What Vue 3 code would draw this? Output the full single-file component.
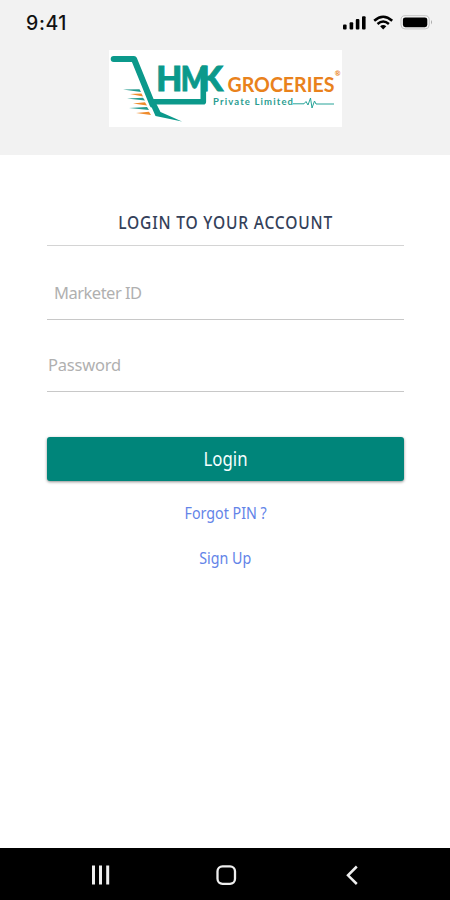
<script setup>
import { ref } from 'vue'
const marketerId = ref('')
const password = ref('')
</script>

<template>
  <main class="screen">
    <header class="header">
      <div class="status">
        <span class="time">9:41</span>
        <svg class="indicators" width="92" height="18" viewBox="0 0 92 18">
          <rect x="2" y="10.5" width="3.6" height="5" rx="1" />
          <rect x="8.6" y="8.2" width="3.6" height="7.3" rx="1" />
          <rect x="14.8" y="5" width="3.6" height="10.5" rx="1" />
          <rect x="21" y="2.2" width="3.6" height="13.3" rx="1" />
          <g fill="none" stroke="#000" stroke-width="2.5">
            <path d="M33.2 6.7Q42.2 -1.2 51.2 6.7" />
            <path d="M36.5 10Q42.2 5 47.9 10" />
          </g>
          <path d="M39.1 12.3Q42.2 9.6 45.3 12.3L42.2 15.4Z" />
          <rect x="60" y="1.7" width="28.2" height="13.2" rx="4" fill="#f7f7f7" stroke="#c4c4c4" />
          <rect x="61.9" y="3.4" width="24.4" height="9.8" rx="2.4" />
          <path d="M90 6.1Q92 8.3 90 10.5Z" fill="#aaa" />
        </svg>
      </div>
      <svg class="logo" width="233" height="77" viewBox="0 0 233 77">
        <rect width="233" height="77" fill="#fff" />
        <g fill="none" stroke="#0b998b" stroke-linejoin="round">
          <path d="M4.7 9H25L43.5 54.5" stroke-width="6" stroke-linecap="round" />
          <path d="M43 51.7H94.3V17" stroke-width="5.6" />
        </g>
        <path d="M39 49L46 51L51.5 62L73 71.5L46.5 66Z" fill="#0b998b" />
        <g fill="#249b8f">
          <path d="M14 39.5L30.5 39.3L32 42Z" />
          <path d="M18 48.5L34 47.8L36 50.5Z" />
          <path d="M20 58L38 57L40 60Z" />
        </g>
        <g fill="#ef8b2c">
          <path d="M21 44L32.5 43.4L34 46.5Z" />
          <path d="M24 53.5L36 52.2L38 55.5Z" />
          <path d="M27 63L40 61.8L42 65Z" />
        </g>
        <text class="brand" y="40.7"><tspan x="47.3" textLength="26" lengthAdjust="spacingAndGlyphs">H</tspan><tspan x="71.8" textLength="27.5" lengthAdjust="spacingAndGlyphs">M</tspan><tspan x="90.5" textLength="23.5" lengthAdjust="spacingAndGlyphs">K</tspan></text>
        <text class="groceries" x="118.5" y="41.5" textLength="107" lengthAdjust="spacingAndGlyphs">GROCERIES</text>
        <text class="registered" x="225.8" y="25.5">®</text>
        <text class="private" x="104" y="54.5" textLength="80" lengthAdjust="spacing">Private Limited</text>
        <path d="M184 53.8H195L197 51.5L199 55L201.5 48L203 58L205.5 51L207 54H225" fill="none" stroke="#26a398" stroke-width="1" />
      </svg>
    </header>

    <form class="login" @submit.prevent>
      <h1 class="title"><span>LOGIN TO YOUR ACCOUNT</span></h1>
      <input v-model="marketerId" class="field marketer" placeholder="Marketer ID" aria-label="Marketer ID" />
      <input v-model="password" class="field password" type="password" placeholder="Password" aria-label="Password" />
      <button class="submit" type="submit"><span>Login</span></button>
      <a class="link forgot" href="#">Forgot PIN ?</a>
      <a class="link signup" href="#">Sign Up</a>
    </form>

    <nav class="navbar">
      <svg width="450" height="52" viewBox="0 0 450 52" fill="none" stroke="#eee">
        <path d="M93.5 17.5V36.5M100.5 17.5V36.5M107.7 17.5V36.5" stroke-width="3" />
        <rect x="217.5" y="18.3" width="17.5" height="17.5" rx="5" stroke-width="2.3" />
        <path d="M356.8 18.5L348 27.3L356.8 36" stroke-width="2.5" />
      </svg>
    </nav>
  </main>
</template>

<style>
body {
  margin: 0;
}
</style>

<style scoped>
.screen {
  display: flex;
  flex-direction: column;
  width: 450px;
  height: 900px;
  overflow: hidden;
  background: #fff;
  font-family: "Noto Sans", "Open Sans", sans-serif;
}
.header {
  box-sizing: border-box;
  height: 155px;
  flex: none;
  background: #f2f2f2;
}
.status {
  display: flex;
  box-sizing: border-box;
  height: 50px;
  padding: 11px 17px 0 26px;
  justify-content: space-between;
  align-items: flex-start;
}
.time {
  font: 500 19.5px/24px Inter, sans-serif;
  color: #111;
  letter-spacing: 0.6px;
}
.indicators {
  margin-top: 3px;
}
.logo {
  display: block;
  margin-left: 109px;
}
.brand {
  font: 900 35px Lato, sans-serif;
  fill: #0b998b;
  stroke: #0b998b;
  stroke-width: 1px;
}
.groceries {
  font: 700 21.5px Lato, sans-serif;
  fill: #e9821c;
}
.registered {
  font: 700 7px Lato, sans-serif;
  fill: #e9821c;
}
.private {
  font: 700 9.5px Lato, sans-serif;
  fill: #2a9d91;
}
.login {
  display: flex;
  flex: 1;
  flex-direction: column;
  padding: 46px 46px 0 47px;
}
.title {
  display: flex;
  box-sizing: border-box;
  height: 45px;
  margin: 0;
  justify-content: center;
  border-bottom: 1px solid #d4d4d4;
  font-size: 17.5px;
  font-weight: 500;
  line-height: 43px;
  letter-spacing: 0.9px;
  color: #34415a;
  white-space: nowrap;
}
.title span {
  transform: scaleX(0.89);
}
.field {
  box-sizing: border-box;
  width: 100%;
  border: 0;
  border-bottom: 1px solid #c8c8c8;
  border-radius: 0;
  outline: 0;
  background: transparent;
  font-family: inherit;
  font-size: 16.5px;
  color: #333;
}
.field::placeholder {
  color: #b0b0b0;
  opacity: 1;
}
.marketer {
  height: 74px;
  padding: 20px 7px 0;
  letter-spacing: -0.5px;
}
.password {
  height: 72px;
  padding: 17px 1px 0;
  letter-spacing: -0.2px;
}
.submit {
  height: 44px;
  margin-top: 45px;
  padding: 0 0 1px;
  border: 0;
  border-radius: 3px;
  background: #00857a;
  box-shadow: 0 1px 3px rgba(0, 0, 0, 0.45);
  color: #f6ffff;
  font-family: inherit;
  font-size: 19.5px;
}
.submit span {
  display: inline-block;
  transform: scaleX(0.86);
}
.link {
  align-self: center;
  color: #6384e8;
  font-size: 15.5px;
  line-height: 22px;
  text-decoration: none;
  transform: scaleX(0.92);
}
.forgot {
  margin-top: 21px;
}
.signup {
  margin-top: 23px;
}
.navbar {
  height: 52px;
  flex: none;
  background: #000;
}
.navbar svg {
  display: block;
}
</style>
